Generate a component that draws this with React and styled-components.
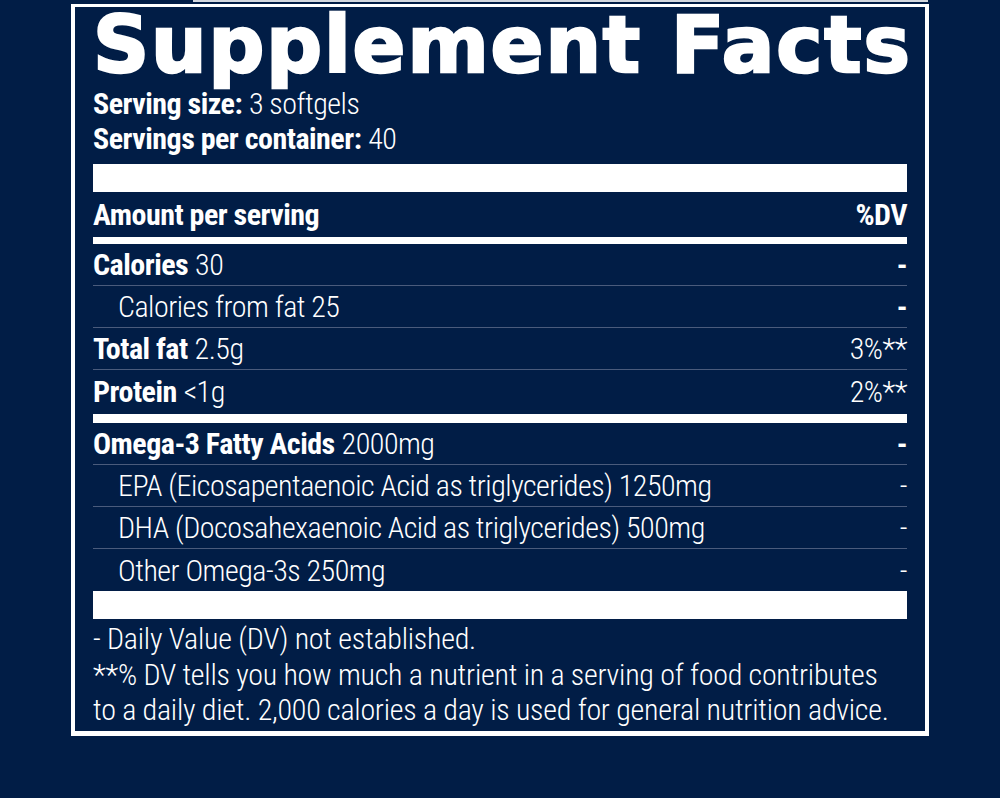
import styled, { createGlobalStyle } from 'styled-components';

const GlobalStyle = createGlobalStyle`
    body {
        margin: 0;
        background: #011d46;
        color: #fff;
        font-family: "Roboto Condensed", "Roboto", "Open Sans", sans-serif;
        font-stretch: condensed;
    }
`;

const facts = [
    { label: 'Calories', value: '30', dv: '-', boldDv: true },
    { label: 'Calories from fat 25', dv: '-', boldDv: true, indent: true },
    { label: 'Total fat', value: '2.5g', dv: '3%**' },
    { label: 'Protein', value: '<1g', dv: '2%**' },
];

const omega = [
    { label: 'Omega-3 Fatty Acids', value: '2000mg', dv: '-', boldDv: true },
    { label: 'EPA (Eicosapentaenoic Acid as triglycerides) 1250mg', dv: '-', indent: true },
    { label: 'DHA (Docosahexaenoic Acid as triglycerides) 500mg', dv: '-', indent: true },
    { label: 'Other Omega-3s 250mg', dv: '-', indent: true },
];

function FactRow({ item, last }) {
    return (
        <Row $last={last}>
            {item.indent ? (
                <Light $indent>{item.label}</Light>
            ) : (
                <span>
                    <Bold>{item.label}</Bold> <Light>{item.value}</Light>
                </span>
            )}
            {item.boldDv ? <Bold>{item.dv}</Bold> : <Light>{item.dv}</Light>}
        </Row>
    );
}

export default function App() {
    return (
        <Page>
            <GlobalStyle />
            <TopEdge />
            <Panel>
                <Title>Supplement Facts</Title>
                <Serving>
                    <div>
                        <Bold>Serving size:</Bold> <Light>3 softgels</Light>
                    </div>
                    <div>
                        <Bold>Servings per container:</Bold> <Light>40</Light>
                    </div>
                </Serving>
                <Bar $h={28} $mt={8} />
                <Header>
                    <Bold>Amount per serving</Bold>
                    <Bold>%DV</Bold>
                </Header>
                <Bar $h={7} />
                {facts.map((item, i) => (
                    <FactRow key={item.label} item={item} last={i === facts.length - 1} />
                ))}
                <Bar $h={9} $mt={2} />
                {omega.map((item, i) => (
                    <FactRow key={item.label} item={item} last={i === omega.length - 1} />
                ))}
                <Bar $h={28} $mt={0} />
                <Notes>
                    <div>- Daily Value (DV) not established.</div>
                    <div>**% DV tells you how much a nutrient in a serving of food contributes</div>
                    <div>to a daily diet. 2,000 calories a day is used for general nutrition advice.</div>
                </Notes>
            </Panel>
        </Page>
    );
}

const Page = styled.div`
    width: 1000px;
    height: 798px;
    overflow: hidden;
`;

const TopEdge = styled.div`
    margin-left: 193px;
    width: 735px;
    height: 2px;
    background: #d3d7de;
`;

const Panel = styled.div`
    box-sizing: border-box;
    width: 858px;
    margin: 2px 0 0 71px;
    border: 4px solid #fff;
    border-top-width: 3px;
    border-bottom-width: 5px;
    padding: 0 18px 3px;
`;

const Title = styled.h1`
    margin: 0;
    font-family: "DejaVu Sans", sans-serif;
    font-stretch: normal;
    font-weight: 700;
    font-size: 78px;
    line-height: 76px;
    letter-spacing: 1.9px;
    white-space: nowrap;
    -webkit-text-stroke: 2.5px #fff;
`;

const Serving = styled.div`
    margin-top: 3px;
    font-size: 30px;
    line-height: 35px;
`;

const Bold = styled.span`
    font-weight: 700;
    letter-spacing: -0.5px;
`;

const Light = styled.span`
    font-weight: 300;
    letter-spacing: -0.5px;
    padding-left: ${(p) => (p.$indent ? '25px' : '0')};
`;

const Bar = styled.div`
    height: ${(p) => p.$h}px;
    margin-top: ${(p) => p.$mt || 0}px;
    background: #fff;
`;

const Header = styled.div`
    display: flex;
    justify-content: space-between;
    height: 45px;
    font-size: 30px;
    line-height: 45px;
`;

const Row = styled.div`
    box-sizing: border-box;
    display: flex;
    justify-content: space-between;
    align-items: center;
    height: 42px;
    font-size: 30px;
    line-height: 41px;
    border-bottom: ${(p) => (p.$last ? 'none' : '1px solid #4a5b7c')};
`;

const Notes = styled.div`
    margin-top: 2px;
    font-size: 30px;
    font-weight: 300;
    letter-spacing: -0.25px;
    line-height: 35.5px;
    white-space: nowrap;
`;
